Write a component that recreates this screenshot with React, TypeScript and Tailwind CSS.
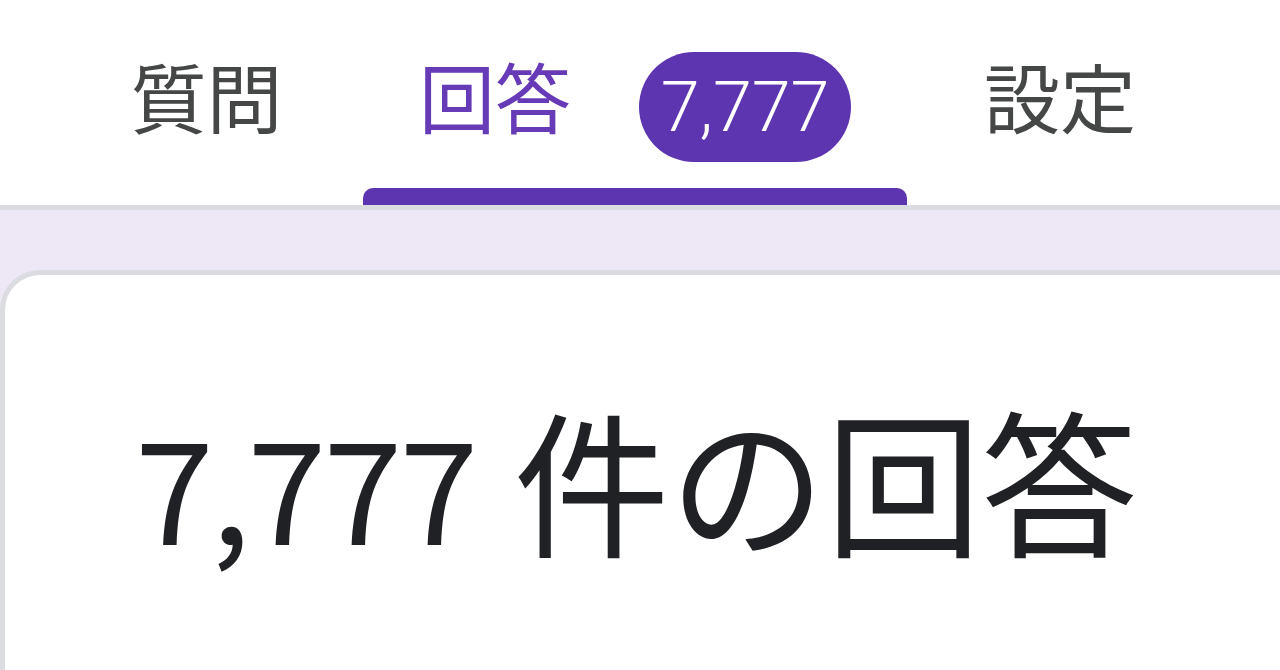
const FONT = { fontFamily: '"Noto Sans CJK JP", "Noto Sans", sans-serif' };

export default function App() {
  return (
    <div className="w-[1280px] h-[670px] overflow-hidden bg-white" style={FONT}>
      <div className="flex h-[205px]">
        <div className="w-[50px]" />
        <div className="w-[313px] flex flex-col">
          <div className="flex-1 flex items-center justify-center pt-[2px] text-[76px] leading-none text-[#444746]">
            質問
          </div>
          <div className="h-[17px]" />
        </div>
        <div className="w-[544px] flex flex-col">
          <div className="flex-1 flex items-center justify-center gap-[68px] pt-[2px]">
            <span className="text-[76px] leading-none text-[#673ab7]">回答</span>
            <span
              className="mt-[24px] h-[110px] w-[212px] rounded-full bg-[#5e35b1] text-white flex items-center justify-center text-[70px] leading-none font-light"
              style={{ fontFamily: 'Roboto, "Noto Sans", sans-serif' }}
            >
              7,777
            </span>
          </div>
          <div className="h-[17px] bg-[#5e35b1] rounded-t-[10px]" />
        </div>
        <div className="w-[306px] flex flex-col">
          <div className="flex-1 flex items-center justify-center pt-[2px] text-[76px] leading-none text-[#444746]">
            設定
          </div>
          <div className="h-[17px]" />
        </div>
      </div>
      <div className="border-t-[5px] border-[#dadce0] bg-[#ede7f6] pt-[60px]">
        <div className="h-[400px] bg-white border-t-[5px] border-l-[5px] border-[#dadce0] rounded-tl-[40px] pl-[130px] pt-[124px]">
          <div className="text-[156px] leading-none text-[#202124] whitespace-nowrap flex items-baseline">
            <span className="text-[142px] tracking-[-0.02em]">7,777</span>
            <span className="ml-[38px]">件の回答</span>
          </div>
        </div>
      </div>
    </div>
  );
}
